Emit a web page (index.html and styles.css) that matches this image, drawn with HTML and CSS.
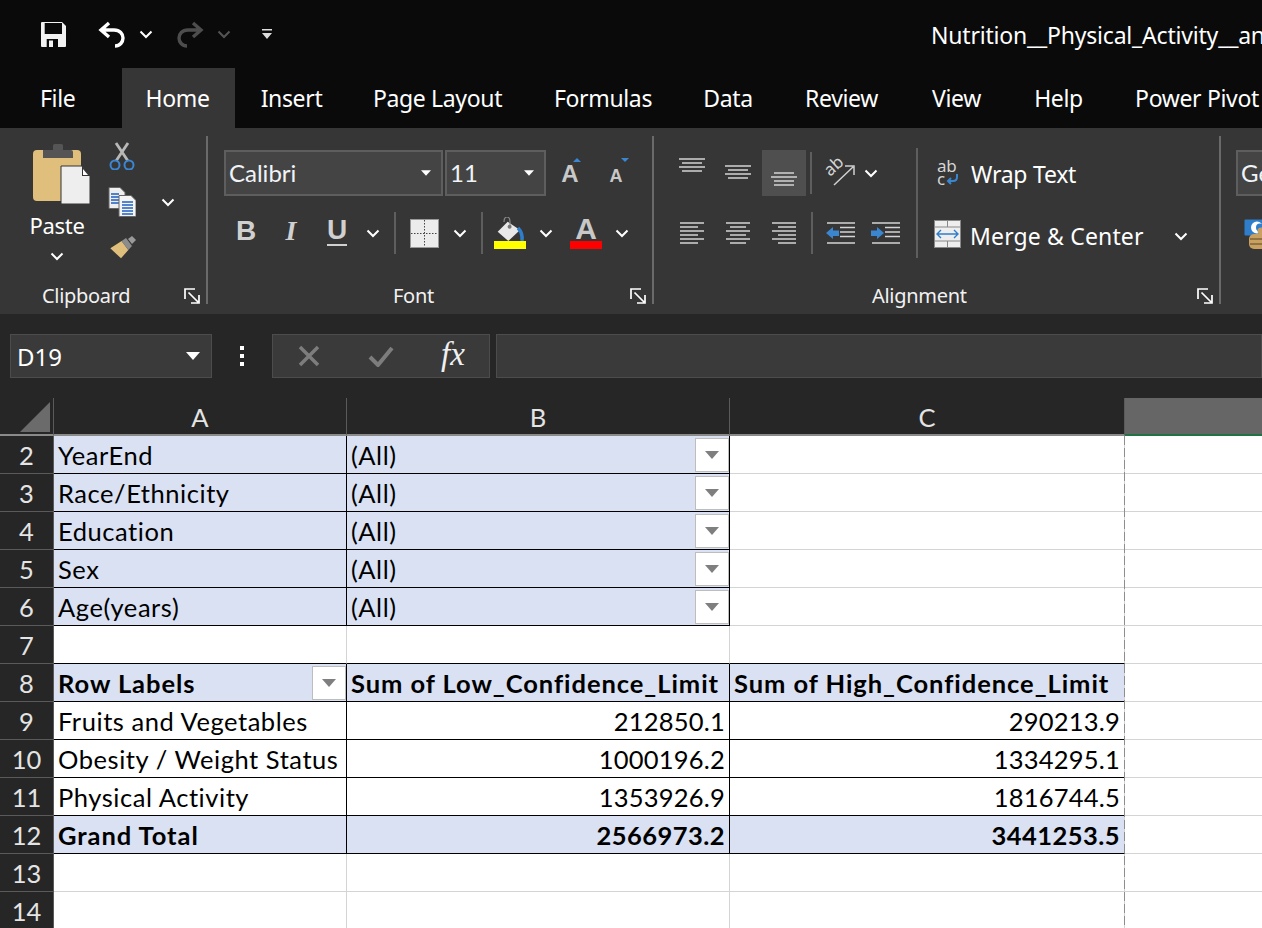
FILE: index.html
```html
<!DOCTYPE html>
<html>
<head>
  <meta charset="utf-8">
  <title>Nutrition__Physical_Activity</title>
  <link rel="stylesheet" href="styles.css">
</head>
<body>
  <svg class="defs">
    <symbol id="chev" viewBox="0 0 14 9"><path d="M1.500 1.500 7 7l5.500-5.500" fill="none" stroke="#fff" stroke-width="2"/></symbol>
    <symbol id="launch" viewBox="0 0 16 16"><path d="M1 11V1h10M4.500 4.500 14 14M15 7v8H7" fill="none" stroke="#fff" stroke-width="1.700"/></symbol>
    <symbol id="tri" viewBox="0 0 14 8"><path d="M0 0h14L7 8z" fill="#fff"/></symbol>
  </svg>

  <div class="titlebar">
    <svg class="i25" viewBox="0 0 25 25"><path d="M1 0h20l4 4v20q0 1-1 1H1q-1 0-1-1V1q0-1 1-1z" fill="#f2f2f2"/><path d="M3.700 1H21v11H3.700zM5.700 17H17v8H5.700z" fill="#0a0a0a"/><path d="M8 18.500h4V25H8z" fill="#f2f2f2"/></svg>
    <svg class="i28" viewBox="0 0 28 28"><path d="M11 3 3 10l8 7M3 10h13c6 0 9 4 9 8s-3 8-8 8" fill="none" stroke="#fff" stroke-width="3.400"/></svg>
    <svg class="c14"><use href="#chev"/></svg>
    <svg class="i28" viewBox="0 0 28 28"><path d="M17 3l8 7-8 7M25 10H12c-6 0-9 4-9 8s3 8 8 8" fill="none" stroke="#4d4d4d" stroke-width="3.400"/></svg>
    <svg class="c14 dim"><use href="#chev"/></svg>
    <svg class="qat" viewBox="0 0 12 12"><path d="M1 1h10v1.500H1zM1 5h10L6 11z" fill="#ddd"/></svg>
    <div class="doc-title">Nutrition__Physical_Activity__an</div>
  </div>

  <div class="tabs">
    <div class="tab tab-file">File</div>
    <div class="tab tab-on">Home</div>
    <div class="tab">Insert</div>
    <div class="tab">Page Layout</div>
    <div class="tab">Formulas</div>
    <div class="tab">Data</div>
    <div class="tab">Review</div>
    <div class="tab">View</div>
    <div class="tab">Help</div>
    <div class="tab">Power Pivot</div>
  </div>

  <div class="ribbon">
    <div class="group g-clip">
      <div class="clip-body">
        <div class="paste">
          <svg class="paste-ico" viewBox="0 0 57 60">
            <rect x="0" y="6" width="48" height="51" rx="4" fill="#e0bf7d"/>
            <path d="M10 13V6h10V1.500q0-1.500 1.500-1.500h7Q30 0 30 1.500V6h8q2 0 2 2v6H10z" fill="#555"/>
            <path d="M28 22h21l8 10v28H28z" fill="#eee" stroke="#333" stroke-width="1"/>
            <path d="M49 22v10h8z" fill="#333"/><path d="M50 25v6h5z" fill="#fff"/>
          </svg>
          <span class="paste-lbl">Paste</span>
          <svg class="c14"><use href="#chev"/></svg>
        </div>
        <div class="clip-tools">
          <svg class="i28" viewBox="0 0 28 28">
            <path d="M8 1 20 19M20 1 8 19" stroke="#b8b8b8" stroke-width="2.800" fill="none"/>
            <circle cx="7" cy="23" r="4.500" fill="none" stroke="#3a86d0" stroke-width="2"/>
            <circle cx="21" cy="23" r="4.500" fill="none" stroke="#3a86d0" stroke-width="2"/>
          </svg>
          <svg class="i28 tall" viewBox="0 0 28 31">
            <path d="M1 .5h11l5 5v16H1z" fill="#eee" stroke="#666"/>
            <path d="M3 7h8M3 10h8M3 13h8M3 16h8" stroke="#1f5fc0" stroke-width="1.400"/>
            <path d="M11 8.500h12l5 5v16H11z" fill="#f4f4f4" stroke="#666"/>
            <path d="M14 15h11M14 18h11M14 21h11M14 24h11M14 27h11" stroke="#1f5fc0" stroke-width="1.400"/>
          </svg>
          <svg class="i28 brush" viewBox="0 0 28 24">
            <path d="M2.300 12.300 13.600 5l6.700 9-7.300 8.300z" fill="#e0bf7d"/>
            <path d="M13.600 5l6.700 9 3.700-4-6-8z" fill="#8c8c8c"/>
            <path d="M20 3l4-3 4 4-4 4z" fill="#9a9a9a"/>
          </svg>
        </div>
        <svg class="c14 clip-chev"><use href="#chev"/></svg>
      </div>
      <div class="foot foot-clip"><span>Clipboard</span><svg class="launch"><use href="#launch"/></svg></div>
    </div>
    <div class="vsep"></div>

    <div class="group g-font">
      <div class="font-row1">
        <div class="combo"><span>Calibri</span><svg class="t10"><use href="#tri"/></svg></div>
        <div class="combo"><span>11</span><svg class="t10"><use href="#tri"/></svg></div>
        <div class="grow"><span class="glyph-a big">A</span><svg class="mark" viewBox="0 0 8 4"><path d="M0 4h8L4 0z" fill="#3a86d0"/></svg></div>
        <div class="grow shrink"><span class="glyph-a small">A</span><svg class="mark" viewBox="0 0 8 4"><path d="M0 0h8L4 4z" fill="#3a86d0"/></svg></div>
      </div>
      <div class="font-row2">
        <span class="fmt fmt-b">B</span>
        <span class="fmt fmt-i">I</span>
        <span class="fmt fmt-u">U</span>
        <svg class="c14"><use href="#chev"/></svg>
        <div class="sep"></div>
        <svg class="i29" viewBox="0 0 29 29">
          <rect x="0.500" y="0.500" width="28" height="28" fill="#ececec" stroke="#999"/>
          <path d="M14.500 1v27M1 14.500h27" stroke="#444" stroke-dasharray="1.500 1.500"/>
        </svg>
        <svg class="c14"><use href="#chev"/></svg>
        <div class="sep"></div>
        <svg class="fill-ico" viewBox="0 0 32 32">
          <path d="M10 5q0-5 3-5t3 5" fill="none" stroke="#8a8a8a" stroke-width="1.200"/>
          <path d="M3.700 14.700 13.700 4.700 26 13 14.300 24z" fill="#e8e8e8"/>
          <path d="M16 5v5" stroke="#8a8a8a" stroke-width="1.200"/>
          <circle cx="15.600" cy="9.700" r="2" fill="#777"/>
          <path d="M24 11q5 5 4 13" fill="none" stroke="#2f7ecb" stroke-width="3.500"/>
          <rect x="0" y="24" width="32" height="8" fill="#ff0"/>
        </svg>
        <svg class="c14"><use href="#chev"/></svg>
        <div class="color-a"><span>A</span><i></i></div>
        <svg class="c14"><use href="#chev"/></svg>
      </div>
      <div class="foot foot-font"><span>Font</span><svg class="launch"><use href="#launch"/></svg></div>
    </div>
    <div class="vsep"></div>

    <div class="group g-align">
      <div class="align-body">
        <div class="align-left">
          <div class="align-row1">
            <svg class="i30" viewBox="0 0 30 30"><path d="M2 1h26M5 5h20M2 9h26M5 13h20" class="ln"/></svg>
            <svg class="i30" viewBox="0 0 30 30"><path d="M2 8h26M5 12h20M2 16h26M5 20h20" class="ln"/></svg>
            <div class="active"><svg class="i30" viewBox="0 0 30 30"><path d="M5 15h20M2 19h26M5 23h20M5 27h20" class="ln"/></svg></div>
            <div class="sep short"></div>
            <svg class="i30 open" viewBox="0 0 30 30">
              <text class="abc abc-big" transform="translate(5 19) rotate(-42)">ab</text>
              <path d="M9 27 28 9M20 8h9v9" fill="none" stroke="#d0d0d0" stroke-width="1.500"/>
            </svg>
            <svg class="c14"><use href="#chev"/></svg>
          </div>
          <div class="align-row2">
            <svg class="i26" viewBox="0 0 26 24"><path d="M1 2h24M1 6h18M1 10h24M1 14h18M1 18h24M1 22h18" class="ln"/></svg>
            <svg class="i26" viewBox="0 0 26 24"><path d="M1 2h24M5 6h16M1 10h24M5 14h16M1 18h24M5 22h16" class="ln"/></svg>
            <svg class="i26" viewBox="0 0 26 24"><path d="M1 2h24M7 6h18M1 10h24M7 14h18M1 18h24M7 22h18" class="ln"/></svg>
            <div class="sep"></div>
            <svg class="i29 ind" viewBox="0 0 29 22"><path d="M1 1h28M14 5.500h15M14 10h15M14 14.500h15M1 21h28" class="ln"/><path d="M0 11 7 5v3.500h6V14H7v3z" fill="#3a86d0"/></svg>
            <svg class="i29 ind" viewBox="0 0 29 22"><path d="M1 1h28M14 5.500h15M14 10h15M14 14.500h15M1 21h28" class="ln"/><path d="M13 11 6 5v3.500H0V14h6v3z" fill="#3a86d0"/></svg>
          </div>
        </div>
        <div class="sep tall-sep"></div>
        <div class="align-right">
          <div class="wrap-row">
            <svg class="wrap-ico" viewBox="0 0 22 26">
              <text class="abc abc-big"><tspan x="0" y="12">ab</tspan><tspan x="0" y="25">c</tspan></text>
              <path d="M20 14v3q0 4-4 4h-5M14 18l-3 3 3 3" fill="none" stroke="#3a86d0" stroke-width="2"/>
            </svg>
            <span>Wrap Text</span>
          </div>
          <div class="merge-row">
            <svg class="merge-ico" viewBox="0 0 27 28">
              <rect x="0.500" y="0.500" width="26" height="27" fill="#eee" stroke="#888"/>
              <path d="M0 7h27M0 21h27M13.500 0v7M13.500 21v7" stroke="#888"/>
              <path d="M3 14h21M7 10l-4 4 4 4M20 10l4 4-4 4" fill="none" stroke="#2f7ecb" stroke-width="1.400"/>
            </svg>
            <span class="merge-lbl">Merge &amp; Center</span>
            <svg class="c14"><use href="#chev"/></svg>
          </div>
        </div>
      </div>
      <div class="foot foot-align"><span>Alignment</span><svg class="launch"><use href="#launch"/></svg></div>
    </div>
    <div class="vsep"></div>

    <div class="group g-num">
      <div class="combo num-combo"><span>Ge</span></div>
      <svg class="num-ico" viewBox="0 0 24 30">
        <rect x="0.500" y="0.500" width="23" height="16" rx="1" fill="#2f7ecb"/>
        <ellipse cx="13" cy="8.500" rx="6" ry="6" fill="#fff"/>
        <circle cx="16" cy="8.500" r="4" fill="#2f7ecb"/>
        <circle cx="17" cy="12" r="3.500" fill="#c9a060"/>
        <rect x="5" y="15" width="19" height="15" rx="5" fill="#c9a060"/>
        <path d="M6 20h18M6 25h18" stroke="#5a4526" stroke-width="1.200"/>
      </svg>
    </div>
  </div>

  <div class="formula-bar">
    <div class="namebox"><span>D19</span><svg class="t14"><use href="#tri"/></svg></div>
    <div class="dots"><i></i><i></i><i></i></div>
    <div class="fx-btns">
      <svg class="i18" viewBox="0 0 22 22"><path d="M2 2l18 18M20 2 2 20" stroke="#7d7d7d" stroke-width="3.500"/></svg>
      <svg class="i18 ok" viewBox="0 0 26 22"><path d="M2 12l8 8L24 3" fill="none" stroke="#7d7d7d" stroke-width="4"/></svg>
      <span class="fx">fx</span>
    </div>
    <div class="fx-input"></div>
  </div>

  <div class="sheet">
    <table>
      <tr class="heads">
        <th class="corner"><svg class="corner-tri" viewBox="0 0 30 30"><path d="M30 0v30H0z" fill="#6b6b6b"/></svg></th>
        <th>A</th><th>B</th><th>C</th><th class="sel"></th>
      </tr>
      <tr>
        <th>2</th><td class="pv blk">YearEnd</td>
        <td class="pv blk"><div class="flt"><span>(All)</span><b class="drop"><i></i></b></div></td><td></td><td></td>
      </tr>
      <tr>
        <th>3</th><td class="pv blk">Race/Ethnicity</td>
        <td class="pv blk"><div class="flt"><span>(All)</span><b class="drop"><i></i></b></div></td><td></td><td></td>
      </tr>
      <tr>
        <th>4</th><td class="pv blk">Education</td>
        <td class="pv blk"><div class="flt"><span>(All)</span><b class="drop"><i></i></b></div></td><td></td><td></td>
      </tr>
      <tr>
        <th>5</th><td class="pv blk">Sex</td>
        <td class="pv blk"><div class="flt"><span>(All)</span><b class="drop"><i></i></b></div></td><td></td><td></td>
      </tr>
      <tr>
        <th>6</th><td class="pv blk">Age(years)</td>
        <td class="pv blk"><div class="flt"><span>(All)</span><b class="drop"><i></i></b></div></td><td></td><td></td>
      </tr>
      <tr>
        <th>7</th><td class="ub"></td><td class="ub"></td><td class="ub"></td><td></td>
      </tr>
      <tr class="bold">
        <th>8</th>
        <td class="pv blk"><div class="flt"><span>Row Labels</span><b class="drop"><i></i></b></div></td>
        <td class="pv blk">Sum of Low_Confidence_Limit</td>
        <td class="pv ub">Sum of High_Confidence_Limit</td><td></td>
      </tr>
      <tr>
        <th>9</th><td class="blk">Fruits and Vegetables</td><td class="blk num">212850.1</td><td class="ub num">290213.9</td><td></td>
      </tr>
      <tr>
        <th>10</th><td class="blk">Obesity / Weight Status</td><td class="blk num">1000196.2</td><td class="ub num">1334295.1</td><td></td>
      </tr>
      <tr>
        <th>11</th><td class="blk">Physical Activity</td><td class="blk num">1353926.9</td><td class="ub num">1816744.5</td><td></td>
      </tr>
      <tr class="bold">
        <th>12</th><td class="pv blk">Grand Total</td><td class="pv blk num">2566973.2</td><td class="pv ub num">3441253.5</td><td></td>
      </tr>
      <tr><th>13</th><td></td><td></td><td></td><td></td></tr>
      <tr><th>14</th><td></td><td></td><td></td><td></td></tr>
    </table>
    <div class="page-break"></div>
  </div>
</body>
</html>
```

FILE: styles.css
```css
html, body { margin: 0; padding: 0; }
body { width: 1262px; height: 928px; overflow: hidden; background: #262626; color: #fff;
       font-family: "Noto Sans", "Open Sans", sans-serif; }
svg { display: block; flex: none; }
.defs { display: none; }

/* icon sizes */
.c14 { width: 14px; height: 9px; }
.dim { opacity: .3; }
.i25 { width: 25px; height: 25px; }
.i28 { width: 28px; height: 28px; }
.i29 { width: 29px; height: 29px; }
.i30 { width: 30px; height: 30px; }
.i26 { width: 26px; height: 24px; }
.i18 { width: 22px; height: 22px; }
.t10 { width: 10px; height: 6px; }
.t14 { width: 14px; height: 8px; }
.ln { fill: none; stroke: #d4d4d4; stroke-width: 1.5; }
.abc { font: 15px "Noto Sans", sans-serif; fill: #d4d4d4; }
.abc-big { font-size: 17px; }
.open { overflow: visible; }

/* title bar */
.titlebar { height: 68px; background: #0a0a0a; display: grid; padding-left: 8px; align-items: center;
            justify-items: center;
            grid-template-columns: 90px 27px 42px 45px 24px 62px 1fr; }
.qat { width: 12px; height: 12px; }
.doc-title { justify-self: start; margin: 2px 0 0 633px; font-size: 23px; white-space: nowrap; letter-spacing: -.2px; }

/* tabs */
.tabs { height: 60px; background: #0a0a0a; display: grid;
        grid-template-columns: 122px 113px 113px 179px 152px 98px 129px 101px 103px 174px; }
.tab { font-size: 23px; line-height: 60px; text-align: center; white-space: nowrap; letter-spacing: -.35px; }
.tab-file { text-align: left; padding-left: 40px; }
.tab-on { background: #363636; padding-right: 2px; }

/* ribbon */
.ribbon { height: 186px; background: #363636; display: flex; align-items: flex-start; overflow: hidden; }
.vsep { width: 2px; height: 168px; margin-top: 8px; background: #6a6a6a; flex: none; }
.group { height: 186px; flex: none; display: flex; flex-direction: column; }
.sep { width: 2px; height: 42px; background: #5e5e5e; }
.foot { margin-top: auto; height: 32px; display: flex; align-items: center;
        justify-content: space-between; font-size: 20px; letter-spacing: -.3px; color: #f2f2f2; box-sizing: content-box; }
.foot span { margin-top: -2px; }
.launch { width: 16px; height: 16px; }

.g-clip { width: 206px; }
.clip-body { display: flex; padding-top: 16px; height: 134px; box-sizing: border-box; }
.paste { width: 74px; margin-left: 20px; display: flex; flex-direction: column; align-items: center; }
.paste-ico { width: 57px; height: 60px; margin-left: 9px; }
.paste-lbl { font-size: 22px; line-height: 30px; margin-top: 6px; letter-spacing: -.3px; }
.paste .c14 { margin-top: 12px; }
.clip-tools { width: 38px; margin-left: 9px; margin-top: -2px; display: flex; flex-direction: column; align-items: center; gap: 17px; }
.tall { height: 31px; }
.brush { height: 24px; margin-top: 1px; }
.clip-chev { margin-left: 20px; margin-top: 54px; }
.foot-clip { padding: 0 6px 2px 42px; }

.g-font { width: 444px; padding-left: 16px; box-sizing: border-box; }
.font-row1 { display: grid; grid-template-columns: 219px 103px 48px 44px; margin-top: 22px; height: 46px; }
.combo { height: 46px; box-sizing: border-box; border: 2px solid #5e5e5e; background: #444; display: flex;
         align-items: center; justify-content: space-between; padding: 0 10px 0 3px;
         font-family: Lato, sans-serif; font-size: 24px; color: #f0f4f8; }
.combo span { margin-top: -2px; }
.combo + .combo { margin-left: 2px; }
.grow { display: flex; align-items: flex-start; justify-content: center; padding-top: 8px; }
.glyph-a { color: #c8c8c8; font-family: "Liberation Sans", sans-serif; font-weight: bold; line-height: 1; }
.big { font-size: 24px; margin-top: 4px; }
.small { font-size: 18px; margin-top: 9px; }
.mark { width: 8px; height: 4px; margin-left: -6px; margin-right: -2px; }
.shrink .mark { margin-left: -2px; margin-right: -6px; }
.font-row2 { display: grid; align-items: center; justify-items: center; height: 42px; margin-top: 16px;
             grid-template-columns: 44px 46px 46px 26px 18px 40px 32px 12px 44px 28px 52px 20px; }
.fmt { color: #d0d0d0; font-size: 28px; line-height: 1; margin-top: -4px; }
.fmt-b { font-family: "Liberation Sans", sans-serif; font-weight: bold; }
.fmt-i { font-family: "Liberation Serif", serif; font-style: italic; font-weight: bold; }
.fmt-u { font-family: "Liberation Sans", sans-serif; font-weight: bold; border-bottom: 2px solid #d0d0d0; }
.fill-ico { width: 32px; height: 32px; }
.color-a { width: 32px; display: flex; flex-direction: column; align-items: center; }
.color-a span { font: bold 30px/24px "Liberation Sans", sans-serif; color: #c8c8c8; }
.color-a i { width: 32px; height: 8px; background: #f00; display: block; }
.foot-font { padding: 0 6px 2px 169px; }

.g-align { width: 565px; padding-left: 16px; box-sizing: border-box; }
.align-body { display: flex; height: 130px; padding-top: 22px; }
.align-left { width: 242px; }
.align-row1 { display: grid; align-items: center; justify-items: center; height: 46px;
              grid-template-columns: 44px 48px 44px 10px 48px 14px; }
.active { width: 44px; height: 46px; background: #4f4f4f; display: flex; align-items: center; justify-content: center; }
.align-row1 .short { height: 42px; }
.align-row2 { display: grid; align-items: center; justify-items: center; height: 42px; margin-top: 16px;
              grid-template-columns: 44px 48px 44px 12px 44px 46px; }
.ind { height: 22px; }
.tall-sep { height: 110px; margin: -2px 0 0 4px; }
.align-right { width: 290px; margin-left: 4px; font-size: 23px; letter-spacing: -.25px; }
.wrap-row { display: flex; align-items: center; height: 46px; }
.wrap-row span { margin-top: 1px; }
.wrap-ico { width: 22px; height: 26px; margin: 0 12px 0 15px; overflow: visible; }
.merge-row { display: flex; align-items: center; height: 48px; margin-top: 16px; }
.merge-ico { width: 27px; height: 28px; margin: -4px 9px 0 12px; }
.merge-lbl { letter-spacing: .15px; }
.merge-row .c14 { margin-left: 30px; }
.foot-align { padding: 0 6px 2px 202px; }

.g-num { width: 40px; padding: 22px 0 0 15px; }
.num-combo { width: 60px; }
.num-ico { width: 24px; height: 30px; margin: 23px 0 0 8px; }

/* formula bar */
.formula-bar { height: 84px; background: #262626; display: flex; align-items: flex-start; padding-top: 20px; box-sizing: border-box; }
.namebox { width: 202px; height: 44px; margin-left: 10px; box-sizing: border-box; background: #3a3a3a;
           border: 1px solid #4c4c4c; display: flex; align-items: center; justify-content: space-between;
           padding: 0 11px 0 6px; font-size: 24px; }
.dots { width: 60px; height: 44px; display: flex; flex-direction: column; align-items: center; justify-content: center; gap: 4px; }
.dots i { width: 4px; height: 4px; background: #fff; display: block; }
.fx-btns { width: 218px; height: 44px; box-sizing: border-box; background: #3a3a3a; border: 1px solid #4c4c4c;
           display: grid; grid-template-columns: 72px 72px 72px; align-items: center; justify-items: center; }
.ok { width: 26px; }
.fx { font: italic 33px/1 "Liberation Serif", serif; color: #f0f0f0; margin-top: -3px; }
.fx-input { flex: 1; height: 44px; margin-left: 6px; box-sizing: border-box; background: #3a3a3a; border: 1px solid #4c4c4c; }

/* sheet */
.sheet { position: relative; background: #fff; height: 530px; overflow: hidden; }
table { border-collapse: separate; border-spacing: 0; table-layout: fixed; width: 1262px; color: #000;
        font-family: Lato, "Liberation Sans", sans-serif; font-size: 25.5px; }
th, td { height: 38px; box-sizing: border-box; padding: 1px 0 0; white-space: nowrap; }
th { background: #262626; color: #e4e4e4; font-weight: normal; border-bottom: 1px solid #5a5a5a; text-align: center; }
th:nth-child(1) { width: 54px; border-right: 1px solid #5a5a5a; }
th:nth-child(2) { width: 293px; }
th:nth-child(3) { width: 383px; }
th:nth-child(4) { width: 395px; }
.heads th { border-bottom: 2px solid #8a8a8a; border-right: 1px solid #5a5a5a; }
.heads .sel { background: #666; border-bottom: 2px solid #217346; border-right: 0; }
.corner-tri { width: 30px; height: 30px; margin-left: 20px; }
td { padding: 1px 4px 0 4px; border-bottom: 1px solid #d4d4d4; border-right: 1px solid #d4d4d4; letter-spacing: .55px; }
td:last-child { border-right: 0; }
.pv { background: #d9e1f2; }
.blk { border-bottom-color: #000; border-right-color: #000; }
.ub { border-bottom-color: #000; }
td.num { text-align: right; letter-spacing: .2px; }
.bold td { font-weight: bold; letter-spacing: .95px; }
.bold td.num { letter-spacing: .45px; }
.flt { display: flex; align-items: center; justify-content: space-between; margin-right: -4px; height: 36px; }
.drop { width: 34px; height: 34px; box-sizing: border-box; background: #fff; border: 1px solid #bdbdbd;
        display: flex; align-items: center; justify-content: center; }
.drop i { width: 0; height: 0; border-left: 7px solid transparent; border-right: 7px solid transparent;
          border-top: 8px solid #7f7f7f; display: block; }
.page-break { position: absolute; left: 1124px; top: 38px; bottom: 0; width: 1px;
              background: repeating-linear-gradient(to bottom, #8e8e8e 0 9px, transparent 9px 12px); }
```
